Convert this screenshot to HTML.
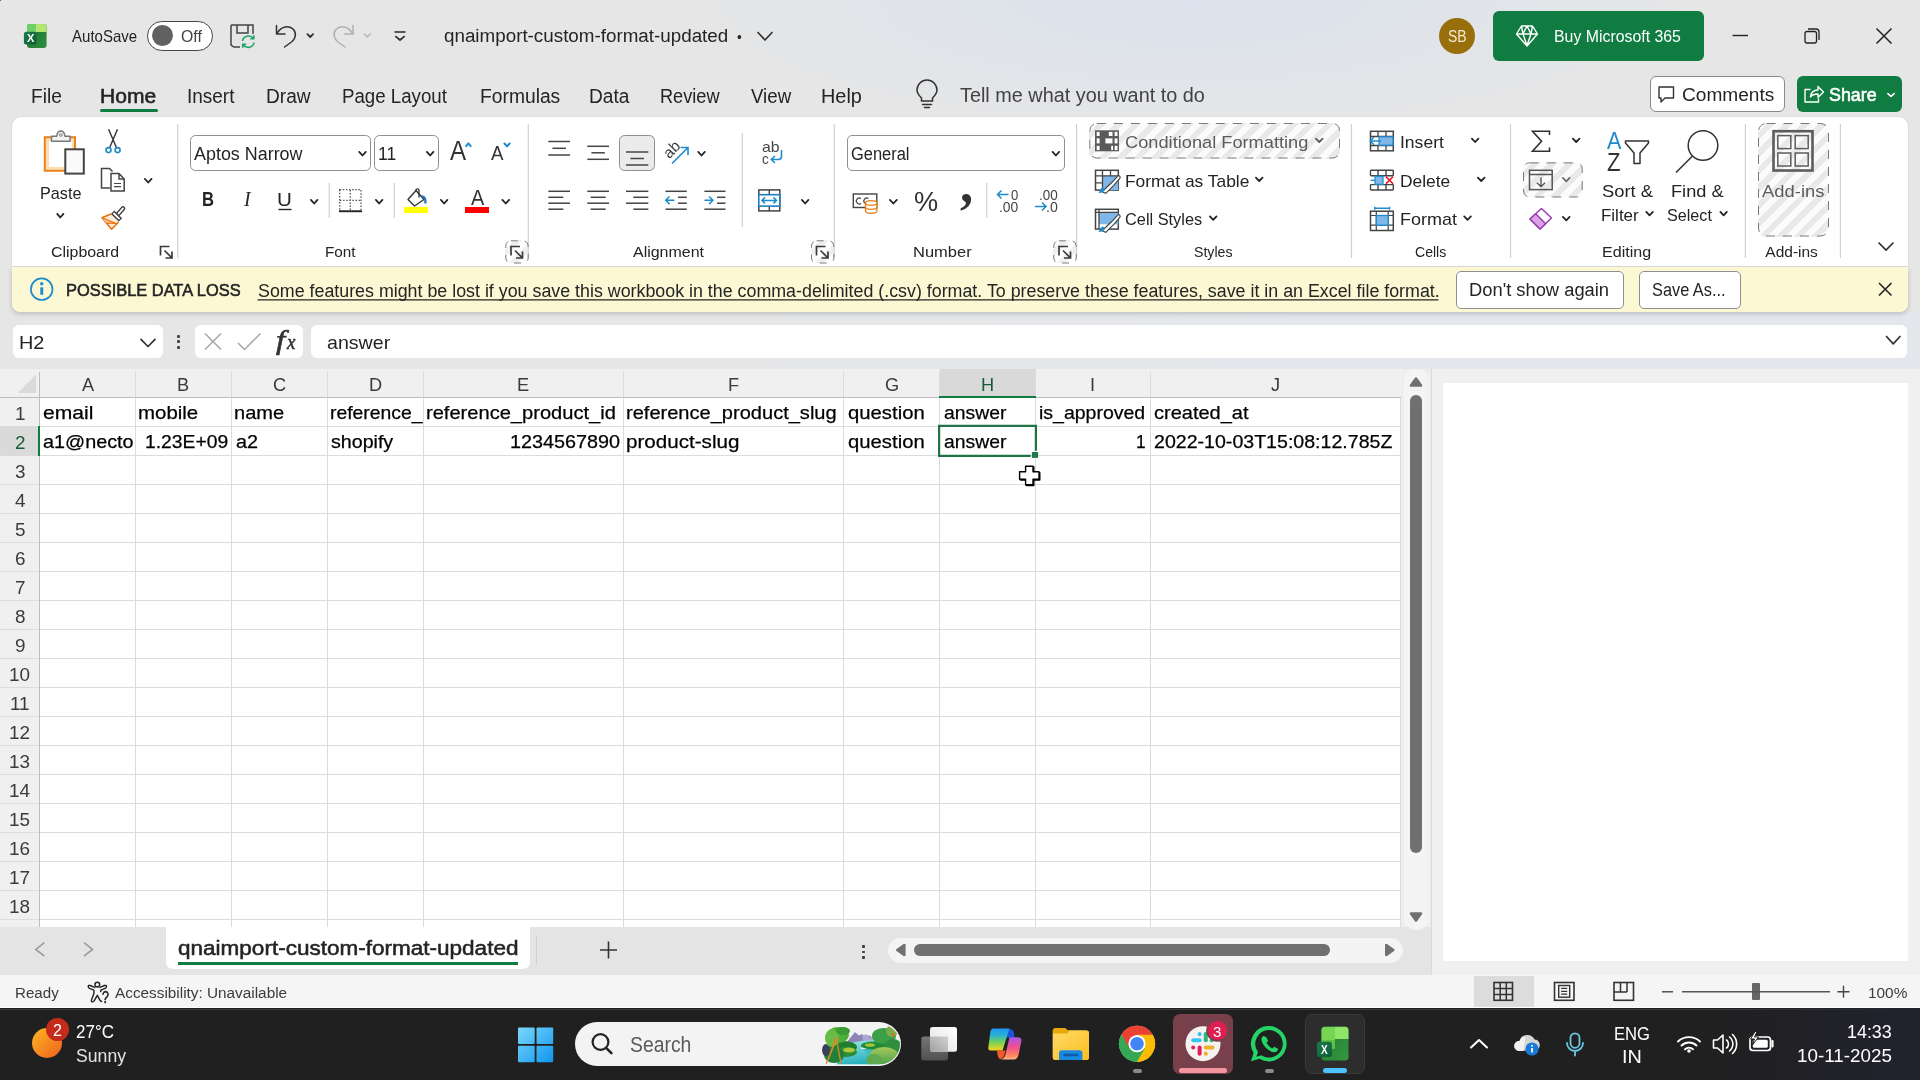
<!DOCTYPE html><html><head><meta charset="utf-8"><title>Excel</title><style>
html,body{margin:0;padding:0;}body{width:1920px;height:1080px;overflow:hidden;position:relative;background:#e6e6e6;font-family:"Liberation Sans", sans-serif;}
.b{position:absolute;}
.t{position:absolute;white-space:pre;line-height:1;transform-origin:0 0;}
svg.ov{position:absolute;left:0;top:0;width:1920px;height:1080px;overflow:visible;}

</style></head><body>
<div class="b" style="left:0px;top:0px;width:1920px;height:1008px;background:#e6e6e6;"></div>
<div class="b" style="left:600px;top:0px;width:1320px;height:118px;background:radial-gradient(ellipse 520px 135px at 590px 0px, rgba(216,225,238,0.8), rgba(216,225,238,0.4) 55%, rgba(216,225,238,0) 100%);"></div>
<div class="b" style="left:147.2px;top:21px;width:65.6px;height:29.6px;background:#fff;border-radius:14.8px;border:1.3px solid #444;box-sizing:border-box;"></div>
<div class="b" style="left:152px;top:25.2px;width:20.8px;height:20.8px;background:#616161;border-radius:50%;"></div>
<div class="b" style="left:1438.5px;top:18px;width:36.0px;height:36px;background:#986f0b;border-radius:50%;"></div>
<div class="b" style="left:1493px;top:11px;width:211px;height:49.5px;background:#107c41;border-radius:6px;"></div>
<div class="b" style="left:100px;top:108.8px;width:58px;height:3.2px;background:#107c41;border-radius:1.6px;"></div>
<div class="b" style="left:1650px;top:76px;width:134.5px;height:36px;background:#fff;border-radius:6px;border:1px solid #8a8a8a;box-sizing:border-box;"></div>
<div class="b" style="left:1797px;top:76px;width:105px;height:36px;background:#107c41;border-radius:6px;"></div>
<div class="b" style="left:12px;top:116.7px;width:1896px;height:149.8px;background:#fff;border-radius:9px 9px 0 0;box-shadow:0 0 2px rgba(0,0,0,0.13);"></div>
<div class="b" style="left:190px;top:135px;width:180.6px;height:35.7px;background:#fff;border-radius:5.5px;border:1px solid #8f8f8f;box-sizing:border-box;"></div>
<div class="b" style="left:374.2px;top:135px;width:64.6px;height:35.7px;background:#fff;border-radius:5.5px;border:1px solid #8f8f8f;box-sizing:border-box;"></div>
<div class="b" style="left:404px;top:206.8px;width:24px;height:6.7px;background:#ffff00;"></div>
<div class="b" style="left:465px;top:206.8px;width:24px;height:6.7px;background:#ff0000;"></div>
<div class="b" style="left:505.3px;top:240.3px;width:23.4px;height:23.2px;background:repeating-linear-gradient(135deg,#ffffff 0px,#ffffff 6.4px,#efefef 6.4px,#efefef 12.4px);border-radius:5px;"></div>
<div class="b" style="left:619.3px;top:135px;width:35.7px;height:35.7px;background:#ebebeb;border-radius:5.5px;border:1px solid #8f8f8f;box-sizing:border-box;"></div>
<div class="b" style="left:811px;top:240.3px;width:23.3px;height:23.2px;background:repeating-linear-gradient(135deg,#ffffff 0px,#ffffff 6.4px,#efefef 6.4px,#efefef 12.4px);border-radius:5px;"></div>
<div class="b" style="left:847.3px;top:135px;width:217.7px;height:35.7px;background:#fff;border-radius:5px;border:1px solid #8f8f8f;box-sizing:border-box;"></div>
<div class="b" style="left:1053.3px;top:240.3px;width:23.4px;height:23.2px;background:repeating-linear-gradient(135deg,#ffffff 0px,#ffffff 6.4px,#efefef 6.4px,#efefef 12.4px);border-radius:5px;"></div>
<div class="b" style="left:1089.3px;top:123px;width:250.7px;height:35.5px;background:repeating-linear-gradient(135deg,#fbfbfb 0px,#fbfbfb 6.4px,#e9e9e9 6.4px,#e9e9e9 12.4px);border-radius:7px;"></div>
<div class="b" style="left:1523px;top:162.4px;width:59.7px;height:35.1px;background:repeating-linear-gradient(135deg,#fbfbfb 0px,#fbfbfb 6.4px,#e9e9e9 6.4px,#e9e9e9 12.4px);border-radius:6px;"></div>
<div class="b" style="left:1758px;top:123px;width:71px;height:113.5px;background:repeating-linear-gradient(135deg,#fbfbfb 0px,#fbfbfb 6.4px,#e9e9e9 6.4px,#e9e9e9 12.4px);border-radius:8px;"></div>
<div class="b" style="left:600px;top:312px;width:1320px;height:57px;background:linear-gradient(90deg, rgba(224,230,238,0) 0%, rgba(226,231,238,0.65) 55%, rgba(226,231,238,0.65) 100%);"></div>
<div class="b" style="left:12px;top:266.5px;width:1896px;height:45.5px;background:#fbf8d3;border-radius:0 0 8px 8px;box-shadow:0 2px 5px rgba(0,0,0,0.18);"></div>
<div class="b" style="left:1456px;top:270.5px;width:167.5px;height:38.0px;background:#fff;border-radius:5px;border:1px solid #8f8f8f;box-sizing:border-box;"></div>
<div class="b" style="left:1638.5px;top:270.5px;width:102.0px;height:38.0px;background:#fff;border-radius:5px;border:1px solid #8f8f8f;box-sizing:border-box;"></div>
<div class="b" style="left:13px;top:325px;width:150px;height:33.3px;background:#fff;border-radius:6px;"></div>
<div class="b" style="left:177.4px;top:334.5px;width:3.0px;height:3.0px;background:#444;border-radius:1px;"></div>
<div class="b" style="left:177.4px;top:340.3px;width:3.0px;height:3.0px;background:#444;border-radius:1px;"></div>
<div class="b" style="left:177.4px;top:346.1px;width:3.0px;height:3.0px;background:#444;border-radius:1px;"></div>
<div class="b" style="left:194.7px;top:325px;width:108.3px;height:33.3px;background:#fff;border-radius:6px;"></div>
<div class="b" style="left:311px;top:325px;width:1596px;height:33.3px;background:#fff;border-radius:6px;"></div>
<div class="b" style="left:0px;top:927px;width:1431px;height:48px;background:#e4e4e5;"></div>
<div class="b" style="left:166px;top:927px;width:364px;height:41.5px;background:#fff;border-radius:0 0 7px 7px;"></div>
<div class="b" style="left:178px;top:962.3px;width:340px;height:2.9px;background:#107c41;"></div>
<div class="b" style="left:862.4px;top:944.9px;width:2.8px;height:2.8px;background:#3b3b3b;border-radius:1px;"></div>
<div class="b" style="left:862.4px;top:950.5px;width:2.8px;height:2.8px;background:#3b3b3b;border-radius:1px;"></div>
<div class="b" style="left:862.4px;top:956.1px;width:2.8px;height:2.8px;background:#3b3b3b;border-radius:1px;"></div>
<div class="b" style="left:888px;top:937.5px;width:515px;height:25.5px;background:#f4f4f4;border-radius:13px;"></div>
<div class="b" style="left:913.7px;top:944.3px;width:416.3px;height:11.7px;background:#707070;border-radius:6px;"></div>
<div class="b" style="left:0px;top:975px;width:1920px;height:33px;background:#f5f5f5;"></div>
<div class="b" style="left:1474px;top:976px;width:60px;height:32px;background:#dcdcdc;"></div>
<div class="b" style="left:1752px;top:982.5px;width:8px;height:17.8px;background:#666;border-radius:1px;"></div>
<div class="b" style="left:0px;top:369px;width:1401px;height:29px;background:#f0f0f0;"></div>
<div class="b" style="left:0px;top:398px;width:40px;height:529px;background:#f0f0f0;"></div>
<div class="b" style="left:40px;top:398px;width:1361px;height:529px;background:#fff;"></div>
<div class="b" style="left:939.5px;top:369px;width:96.0px;height:29px;background:#d9d9d9;"></div>
<div class="b" style="left:0px;top:426.5px;width:40px;height:29.5px;background:#dadada;"></div>
<div class="b" style="left:1401px;top:369px;width:30px;height:558px;background:#eeeeee;"></div>
<div class="b" style="left:1403.5px;top:369px;width:25.5px;height:561px;background:#f4f4f4;border-radius:12px;"></div>
<div class="b" style="left:1410px;top:394.5px;width:12px;height:458.5px;background:#707070;border-radius:6px;"></div>
<div class="b" style="left:1431px;top:369px;width:489px;height:606px;background:#f0f0f0;"></div>
<div class="b" style="left:1443px;top:383px;width:465px;height:578px;background:#fff;"></div>
<div class="b" style="left:0px;top:1008px;width:1920px;height:72px;background:#202020;"></div>
<div class="b" style="left:0px;top:1007px;width:1920px;height:1px;background:#fdfdfd;"></div>
<div class="b" style="left:0px;top:1009px;width:1920px;height:1px;background:#3c3c3c;"></div>
<div class="b" style="left:1700px;top:1008px;width:220px;height:72px;background:linear-gradient(90deg, rgba(32,32,32,0), rgba(34,34,46,1));"></div>
<div class="b" style="left:575px;top:1022px;width:326px;height:44px;background:#f3f3f3;border-radius:22px;"></div>
<div class="b" style="left:1133px;top:1068.7px;width:9px;height:4.3px;background:#8a8a8a;border-radius:2px;"></div>
<div class="b" style="left:1173px;top:1014px;width:60px;height:60px;background:#77404b;border-radius:7px;"></div>
<div class="b" style="left:1179px;top:1068px;width:48px;height:5px;background:#f4949f;border-radius:2.5px;"></div>
<div class="b" style="left:1265px;top:1068.7px;width:9px;height:4.3px;background:#8a8a8a;border-radius:2px;"></div>
<div class="b" style="left:1305.4px;top:1014px;width:59.6px;height:59.7px;background:#2d2d2d;border-radius:7px;border:1px solid #393939;box-sizing:border-box;"></div>
<div class="b" style="left:1323px;top:1068px;width:24px;height:5px;background:#4cc2ff;border-radius:2.5px;"></div>
<svg class="ov" viewBox="0 0 1920 1080">
<defs><linearGradient id="xg1" x1="0" y1="0" x2="1" y2="1"><stop offset="0" stop-color="#1a6e34"/><stop offset="1" stop-color="#2f8f3a"/></linearGradient><linearGradient id="xg2" x1="0" y1="0" x2="1" y2="1"><stop offset="0" stop-color="#1b7f4b"/><stop offset="1" stop-color="#0c5a35"/></linearGradient></defs><g><rect x="27" y="23.9" width="19.6" height="24" rx="3" fill="url(#xg1)"/><path d="M27 32 v-5.1 a3 3 0 0 1 3 -3 h6 v8.1 z" fill="#6ed069"/><path d="M36 23.9 h7.6 a3 3 0 0 1 3 3 v5.1 h-10.6 z" fill="#b3e76f"/><rect x="27" y="32" width="9" height="6" fill="#3fae4b"/><rect x="23.9" y="31.8" width="12.6" height="12.6" rx="2.5" fill="url(#xg2)"/></g>
<path d="M231 25 h22 v9 M231 25 v20 l3 2 h6 M237 25 v8 h11 v-8" fill="none" stroke="#444" stroke-width="1.5"/>
<path d="M242.5 41 a6 5.5 0 0 1 11 -2.5 m0.3 -3.2 v3.5 h-3.5 M254 42.5 a6 5.5 0 0 1 -11 2.3 m-0.3 3 v-3.4 h3.5" fill="none" stroke="#21a366" stroke-width="1.6"/>
<path d="M276.5 25.5 v8.5 h8.5 M277 33.5 c4 -7 12 -9 16.5 -4 c4 5 1 10 -2 12.5 l-7 5" fill="none" stroke="#333" stroke-width="1.5" stroke-linecap="round" stroke-linejoin="round"/>
<polyline points="307.4,34.1 310.25,37.0 313.1,34.1" fill="none" stroke="#333" stroke-width="1.8" stroke-linecap="round" stroke-linejoin="round"/>
<path d="M353 25.5 v8.5 h-8.5 M352.5 33.5 c-4 -7 -12 -9 -16.5 -4 c-4 5 -1 10 2 12.5 l7 5" fill="none" stroke="#b0b0b0" stroke-width="1.5" stroke-linecap="round" stroke-linejoin="round"/>
<polyline points="364.4,34.1 367.25,37.0 370.1,34.1" fill="none" stroke="#c0c0c0" stroke-width="1.8" stroke-linecap="round" stroke-linejoin="round"/>
<line x1="394.5" y1="32" x2="405.5" y2="32" stroke="#333" stroke-width="1.6" stroke-linecap="butt"/>
<polyline points="395.9,36.6 400.0,40.0 404.1,36.6" fill="none" stroke="#333" stroke-width="1.8" stroke-linecap="round" stroke-linejoin="round"/>
<polyline points="758,32.5 765.0,40 772,32.5" fill="none" stroke="#333" stroke-width="1.7" stroke-linecap="round" stroke-linejoin="round"/>
<path d="M1516.5 34 l5 -8 h11 l5 8 l-10.5 12 z M1516.5 34 h21 M1523 34 l4 11.5 l4 -11.5 M1521.5 26 l1.5 8 M1532.5 26 l-1.5 8 M1527 26 l-4 8 M1527 26 l4 8" fill="none" stroke="#fff" stroke-width="1.4" stroke-linejoin="round"/>
<line x1="1732.5" y1="35.5" x2="1748" y2="35.5" stroke="#222" stroke-width="1.4" stroke-linecap="butt"/>
<rect x="1805" y="31.5" width="11.5" height="11.5" rx="2" fill="none" stroke="#222" stroke-width="1.3"/><path d="M1808 29 h8 a3 3 0 0 1 3 3 v8" fill="none" stroke="#222" stroke-width="1.3"/>
<path d="M1876.5 28.5 l15 15 M1891.5 28.5 l-15 15" stroke="#222" stroke-width="1.5"/>
<path d="M921.5 98 c-3 -3 -4.5 -5 -4.5 -8 a10 10 0 0 1 20 0 c0 3 -1.5 5 -4.5 8 v3 h-11 z M921.5 101 h11 M922.5 104.5 h9 M924.5 107.5 h5" fill="none" stroke="#333" stroke-width="1.5" stroke-linecap="round"/>
<path d="M1659 87 h14.5 v11 h-8.5 l-4 4 v-4 h-2 z" fill="none" stroke="#333" stroke-width="1.4" stroke-linejoin="round"/>
<path d="M1810.5 89.5 h-5.500 v12.500 h13.500 v-3.500 M1810.5 97 c0.5 -5 4 -7 7.500 -7 v-3.500 l5.500 5.500 l-5.500 5.500 v-3.500 c-4 0 -6 0.5 -7.500 3 z" fill="none" stroke="#fff" stroke-width="1.4" stroke-linejoin="round"/>
<polyline points="1887.9,93.6 1891.0,96.5 1894.1,93.6" fill="none" stroke="#fff" stroke-width="1.6" stroke-linecap="round" stroke-linejoin="round"/>
<line x1="177.7" y1="124" x2="177.7" y2="258" stroke="#d1d1d1" stroke-width="1.2" stroke-linecap="butt"/>
<line x1="528.3" y1="124" x2="528.3" y2="258" stroke="#d1d1d1" stroke-width="1.2" stroke-linecap="butt"/>
<line x1="834.3" y1="124" x2="834.3" y2="258" stroke="#d1d1d1" stroke-width="1.2" stroke-linecap="butt"/>
<line x1="1076.6" y1="124" x2="1076.6" y2="258" stroke="#d1d1d1" stroke-width="1.2" stroke-linecap="butt"/>
<line x1="1351.5" y1="124" x2="1351.5" y2="258" stroke="#d1d1d1" stroke-width="1.2" stroke-linecap="butt"/>
<line x1="1510.5" y1="124" x2="1510.5" y2="258" stroke="#d1d1d1" stroke-width="1.2" stroke-linecap="butt"/>
<line x1="1745.4" y1="124" x2="1745.4" y2="258" stroke="#d1d1d1" stroke-width="1.2" stroke-linecap="butt"/>
<line x1="1840.4" y1="124" x2="1840.4" y2="258" stroke="#d1d1d1" stroke-width="1.2" stroke-linecap="butt"/>
<line x1="329.3" y1="183" x2="329.3" y2="218" stroke="#d1d1d1" stroke-width="1.2" stroke-linecap="butt"/>
<line x1="394.3" y1="183" x2="394.3" y2="218" stroke="#d1d1d1" stroke-width="1.2" stroke-linecap="butt"/>
<line x1="742.3" y1="133" x2="742.3" y2="227" stroke="#d1d1d1" stroke-width="1.2" stroke-linecap="butt"/>
<line x1="986.7" y1="183" x2="986.7" y2="218" stroke="#d1d1d1" stroke-width="1.2" stroke-linecap="butt"/>
<rect x="44.800" y="137.200" width="30.200" height="33.600" fill="#fbdcae" stroke="#e8821e" stroke-width="2"/><rect x="49" y="141" width="23" height="26" fill="#fff"/><path d="M51.500 141.300 v-5 h5.200 c0.300 -3 1.800 -5.300 4.100 -5.300 s3.800 2.300 4.100 5.300 h5.200 v5 z" fill="#f3f3f3" stroke="#777" stroke-width="1.400" stroke-linejoin="round"/><circle cx="60.800" cy="135" r="1.300" fill="#fff" stroke="#777" stroke-width="1"/><rect x="65.300" y="149.300" width="18.500" height="24.300" fill="#fafafa" stroke="#444" stroke-width="2"/>
<polyline points="57.2,213.9 60.3,217.5 63.4,213.9" fill="none" stroke="#242424" stroke-width="1.8" stroke-linecap="round" stroke-linejoin="round"/>
<path d="M108.600 129.300 L116.400 147.600 M117.500 129.300 L109.700 147.600" stroke="#333" stroke-width="1.400" fill="none"/><circle cx="108.500" cy="150.100" r="2.500" fill="none" stroke="#1e8bcd" stroke-width="1.600"/><circle cx="117.600" cy="150.100" r="2.500" fill="none" stroke="#1e8bcd" stroke-width="1.600"/>
<path d="M110 188 h-8.5 v-19.5 h8 l3 3" fill="none" stroke="#444" stroke-width="1.5"/><path d="M111 173.5 h8 l5.2 5.5 v12 h-13.2 z M119 173.5 v5.5 h5.2" fill="#fff" stroke="#444" stroke-width="1.5"/><path d="M114 183.5 h7 M114 186.7 h7" stroke="#444" stroke-width="1.2"/>
<polyline points="144.9,178.9 148.2,182.5 151.5,178.9" fill="none" stroke="#242424" stroke-width="1.8" stroke-linecap="round" stroke-linejoin="round"/>
<path d="M110.800 214 L102 217.700 L111.600 229.200 L118.600 222" fill="#fdebd6" stroke="#e8710a" stroke-width="1.500" stroke-linejoin="round"/><path d="M102 217.700 L116 223.500 L106.500 223.200" fill="#f9c89a" stroke="#e8710a" stroke-width="1.200" stroke-linejoin="round"/><path d="M118.300 213.800 L123 208.400" stroke="#3b3b3b" stroke-width="4.600" stroke-linecap="round"/><path d="M118.300 213.800 L123 208.400" stroke="#fff" stroke-width="1.800" stroke-linecap="round"/><path d="M112.600 212.200 L120.400 219.900" stroke="#3b3b3b" stroke-width="4.800" stroke-linecap="butt"/><path d="M113.400 213 L119.600 219.100" stroke="#fff" stroke-width="1.900" stroke-linecap="butt"/>
<path d="M160.5 255.5 V246.5 H169.5 M164.5 250.5 L172.0 258.0 M172.0 251.5 V258.0 H165.5" fill="none" stroke="#3b3b3b" stroke-width="1.7"/>
<polyline points="359.2,151.9 362.5,155.5 365.8,151.9" fill="none" stroke="#242424" stroke-width="1.8" stroke-linecap="round" stroke-linejoin="round"/>
<polyline points="426.9,151.9 430.15,155.5 433.4,151.9" fill="none" stroke="#242424" stroke-width="1.8" stroke-linecap="round" stroke-linejoin="round"/>
<polyline points="466.1,146.1 468.4,143.4 470.7,146.1" fill="none" stroke="#1e8bcd" stroke-width="2" stroke-linecap="round" stroke-linejoin="round"/>
<polyline points="504.5,143.5 507.05,146.4 509.6,143.5" fill="none" stroke="#1e8bcd" stroke-width="2" stroke-linecap="round" stroke-linejoin="round"/>
<line x1="278.5" y1="209.5" x2="291.5" y2="209.5" stroke="#242424" stroke-width="1.4" stroke-linecap="butt"/>
<polyline points="310.9,199.9 314.15,203.5 317.4,199.9" fill="none" stroke="#242424" stroke-width="1.8" stroke-linecap="round" stroke-linejoin="round"/>
<rect x="339.7" y="189.7" width="21.3" height="21.3" fill="none" stroke="#555" stroke-width="1.3" stroke-dasharray="1.5 1.6"/><path d="M350.3 190 v21 M340 200.3 h21" stroke="#555" stroke-width="1.3" stroke-dasharray="1.5 1.6"/><path d="M339 211.3 h23" stroke="#222" stroke-width="1.8"/>
<polyline points="375.9,199.9 379.15,203.5 382.4,199.9" fill="none" stroke="#242424" stroke-width="1.8" stroke-linecap="round" stroke-linejoin="round"/>
<path d="M408 199.500 l8 -9 l8 9 l-9.500 6.500 z" fill="#fff" stroke="#3b3b3b" stroke-width="1.500" stroke-linejoin="round"/><path d="M415.800 192 v-1.500 a1.600 1.600 0 0 1 3.200 0 v7" fill="none" stroke="#3b3b3b" stroke-width="1.400"/><path d="M421.500 196 c3.500 0.500 4.500 3.500 3.700 7.500" fill="none" stroke="#1e74c8" stroke-width="2.200"/>
<polyline points="440.9,199.9 444.15,203.5 447.4,199.9" fill="none" stroke="#242424" stroke-width="1.8" stroke-linecap="round" stroke-linejoin="round"/>
<polyline points="502.4,199.9 505.75,203.5 509.1,199.9" fill="none" stroke="#242424" stroke-width="1.8" stroke-linecap="round" stroke-linejoin="round"/>
<rect x="505.8" y="240.8" width="22.400000000000034" height="22.19999999999999" rx="5" fill="none" stroke="#7a7a7a" stroke-width="1" stroke-dasharray="7 7"/>
<path d="M511 255.5 V246.5 H520 M515 250.5 L522.5 258.0 M522.5 251.5 V258.0 H516" fill="none" stroke="#3b3b3b" stroke-width="1.7"/>
<line x1="548.3" y1="141.5" x2="570" y2="141.5" stroke="#444" stroke-width="1.5" stroke-linecap="butt"/>
<line x1="552.4" y1="148.3" x2="565.9" y2="148.3" stroke="#444" stroke-width="1.5" stroke-linecap="butt"/>
<line x1="548.3" y1="155" x2="570" y2="155" stroke="#444" stroke-width="1.5" stroke-linecap="butt"/>
<line x1="587.3" y1="146.3" x2="609" y2="146.3" stroke="#444" stroke-width="1.5" stroke-linecap="butt"/>
<line x1="591.4" y1="152.8" x2="604.9" y2="152.8" stroke="#444" stroke-width="1.5" stroke-linecap="butt"/>
<line x1="587.3" y1="159.3" x2="609" y2="159.3" stroke="#444" stroke-width="1.5" stroke-linecap="butt"/>
<line x1="626" y1="152" x2="648.3" y2="152" stroke="#444" stroke-width="1.5" stroke-linecap="butt"/>
<line x1="630.4" y1="158.5" x2="643.9" y2="158.5" stroke="#444" stroke-width="1.5" stroke-linecap="butt"/>
<line x1="626" y1="165" x2="648.3" y2="165" stroke="#444" stroke-width="1.5" stroke-linecap="butt"/>
<path d="M672 163.5 l15.5 -15.5 M680.5 147.5 h7.5 v7.5" fill="none" stroke="#1e8bcd" stroke-width="1.6"/>
<polyline points="698.2,151.9 701.5,155.5 704.8,151.9" fill="none" stroke="#242424" stroke-width="1.8" stroke-linecap="round" stroke-linejoin="round"/>
<path d="M781.5 150 v6.5 a3 3 0 0 1 -3 3 h-7 M775 156 l-3.7 3.5 l3.7 3.5" fill="none" stroke="#1e8bcd" stroke-width="1.6"/>
<line x1="548.3" y1="191.3" x2="570" y2="191.3" stroke="#444" stroke-width="1.5" stroke-linecap="butt"/>
<line x1="548.3" y1="197.3" x2="563.3" y2="197.3" stroke="#444" stroke-width="1.5" stroke-linecap="butt"/>
<line x1="548.3" y1="203.2" x2="570" y2="203.2" stroke="#444" stroke-width="1.5" stroke-linecap="butt"/>
<line x1="548.3" y1="209.2" x2="563.3" y2="209.2" stroke="#444" stroke-width="1.5" stroke-linecap="butt"/>
<line x1="587.3" y1="191.3" x2="609" y2="191.3" stroke="#444" stroke-width="1.5" stroke-linecap="butt"/>
<line x1="590.65" y1="197.3" x2="605.65" y2="197.3" stroke="#444" stroke-width="1.5" stroke-linecap="butt"/>
<line x1="587.3" y1="203.2" x2="609" y2="203.2" stroke="#444" stroke-width="1.5" stroke-linecap="butt"/>
<line x1="590.65" y1="209.2" x2="605.65" y2="209.2" stroke="#444" stroke-width="1.5" stroke-linecap="butt"/>
<line x1="626" y1="191.3" x2="648.3" y2="191.3" stroke="#444" stroke-width="1.5" stroke-linecap="butt"/>
<line x1="633.3" y1="197.3" x2="648.3" y2="197.3" stroke="#444" stroke-width="1.5" stroke-linecap="butt"/>
<line x1="626" y1="203.2" x2="648.3" y2="203.2" stroke="#444" stroke-width="1.5" stroke-linecap="butt"/>
<line x1="633.3" y1="209.2" x2="648.3" y2="209.2" stroke="#444" stroke-width="1.5" stroke-linecap="butt"/>
<line x1="665.5" y1="191.3" x2="686.8" y2="191.3" stroke="#444" stroke-width="1.5" stroke-linecap="butt"/>
<line x1="665.5" y1="209.2" x2="686.8" y2="209.2" stroke="#444" stroke-width="1.5" stroke-linecap="butt"/>
<line x1="678" y1="197.3" x2="686.8" y2="197.3" stroke="#444" stroke-width="1.5" stroke-linecap="butt"/>
<line x1="678" y1="203.2" x2="686.8" y2="203.2" stroke="#444" stroke-width="1.5" stroke-linecap="butt"/>
<path d="M674.500 200.300 h-8.500 M669.500 196.500 l-3.800 3.800 l3.800 3.800" fill="none" stroke="#1e8bcd" stroke-width="1.5"/>
<line x1="704.4" y1="191.3" x2="725.5" y2="191.3" stroke="#444" stroke-width="1.5" stroke-linecap="butt"/>
<line x1="704.4" y1="209.2" x2="725.5" y2="209.2" stroke="#444" stroke-width="1.5" stroke-linecap="butt"/>
<line x1="717" y1="197.3" x2="725.5" y2="197.3" stroke="#444" stroke-width="1.5" stroke-linecap="butt"/>
<line x1="717" y1="203.2" x2="725.5" y2="203.2" stroke="#444" stroke-width="1.5" stroke-linecap="butt"/>
<path d="M704.400 200.300 h8.500 M709.100 196.500 l3.800 3.800 l-3.800 3.800" fill="none" stroke="#1e8bcd" stroke-width="1.5"/>
<rect x="758.800" y="189.900" width="21" height="21" fill="#fff" stroke="#444" stroke-width="1.500"/><path d="M769.300 190 v4.500 M769.300 206.500 v4.500" stroke="#444" stroke-width="1.400"/><rect x="758.800" y="194.700" width="21" height="11.400" fill="#fff" stroke="#1e7fc0" stroke-width="1.600"/><path d="M762 200.400 h14.500 M765 197.400 l-3 3 l3 3 M773.500 197.400 l3 3 l-3 3" fill="none" stroke="#1e8bcd" stroke-width="1.500"/>
<polyline points="801.9,199.9 805.15,203.5 808.4,199.9" fill="none" stroke="#242424" stroke-width="1.8" stroke-linecap="round" stroke-linejoin="round"/>
<rect x="811.5" y="240.8" width="22.299999999999955" height="22.19999999999999" rx="5" fill="none" stroke="#7a7a7a" stroke-width="1" stroke-dasharray="7 7"/>
<path d="M816.5 255.5 V246.5 H825.5 M820.5 250.5 L828.0 258.0 M828.0 251.5 V258.0 H821.5" fill="none" stroke="#3b3b3b" stroke-width="1.7"/>
<polyline points="1052.6,151.9 1055.85,155.5 1059.1,151.9" fill="none" stroke="#242424" stroke-width="1.8" stroke-linecap="round" stroke-linejoin="round"/>
<rect x="853.3" y="194" width="23.5" height="13.5" fill="#fff" stroke="#444" stroke-width="1.4"/><path d="M861 198.5 a3 3 0 1 0 0 5 M868.5 198.5 a3 3 0 1 0 0 5" fill="none" stroke="#444" stroke-width="1.2"/><path d="M865.5 203 v8 a5.7 2.3 0 0 0 11.4 0 v-8 z" fill="#fff" stroke="#e8821e" stroke-width="1.3"/><ellipse cx="871.2" cy="203" rx="5.7" ry="2.3" fill="#fff" stroke="#e8821e" stroke-width="1.3"/><path d="M865.5 207 a5.7 2.3 0 0 0 11.4 0" fill="none" stroke="#e8821e" stroke-width="1.3"/>
<polyline points="889.9,199.9 893.35,203.5 896.8,199.9" fill="none" stroke="#242424" stroke-width="1.8" stroke-linecap="round" stroke-linejoin="round"/>
<path d="M1008.5 194.5 h-11 M1001.5 190.5 l-4 4 l4 4" fill="none" stroke="#1e8bcd" stroke-width="1.5"/>
<path d="M1035 206.5 h11 M1042 202.5 l4 4 l-4 4" fill="none" stroke="#1e8bcd" stroke-width="1.5"/>
<rect x="1053.8" y="240.8" width="22.40000000000009" height="22.19999999999999" rx="5" fill="none" stroke="#7a7a7a" stroke-width="1" stroke-dasharray="7 7"/>
<path d="M1059 255.5 V246.5 H1068 M1063 250.5 L1070.5 258.0 M1070.5 251.5 V258.0 H1064" fill="none" stroke="#3b3b3b" stroke-width="1.7"/>
<rect x="1089.8" y="123.5" width="249.70000000000005" height="34.5" rx="7" fill="none" stroke="#7a7a7a" stroke-width="1" stroke-dasharray="9 8"/>
<rect x="1095" y="130.3" width="24" height="21" fill="#5a5a5a"/><rect x="1096.7" y="131.9" width="2.9" height="4.1" fill="#fff"/><rect x="1096.7" y="138.4" width="2.9" height="5" fill="#fff"/><rect x="1096.7" y="145.8" width="2.9" height="4.3" fill="#fff"/><rect x="1114.6" y="131.9" width="2.9" height="4.1" fill="#fff"/><rect x="1114.6" y="138.4" width="2.9" height="5" fill="#fff"/><rect x="1114.6" y="145.8" width="2.9" height="4.3" fill="#fff"/><rect x="1105.4" y="138.4" width="7.1" height="5" fill="#fff"/><rect x="1108.8" y="131.9" width="3.7" height="4.1" fill="#fff"/><rect x="1111.2" y="145.8" width="1.8" height="4.3" fill="#fff"/>
<polyline points="1315.9,138.6 1319.25,142.0 1322.6,138.6" fill="none" stroke="#5c5c5c" stroke-width="1.8" stroke-linecap="round" stroke-linejoin="round"/>
<rect x="1095.5" y="170.3" width="22.8" height="19.8" fill="#fff" stroke="#444" stroke-width="1.5"/><rect x="1102.5" y="175.8" width="15.8" height="14.3" fill="#7fb8e8"/><path d="M1095.5 175.8 h22.8 M1095.5 182.8 h7 M1102.5 170.3 v19.8 M1110.5 170.3 v5.5" stroke="#444" stroke-width="1.3" fill="none"/><path d="M1102 191.8 l9.5 -9 l6 -6.5 a1.5 1.5 0 0 1 2.3 2 l-6 7 l-8 8 z" fill="#fff" stroke="#444" stroke-width="1.2"/><path d="M1098.5 192.8 c2.5 0.5 6 -1 6.5 -3.5 l-2 -1.8 c-2.5 0.3 -3 3.5 -4.5 5.3 z" fill="#1e8bcd"/>
<polyline points="1255.9,177.6 1259.25,181.0 1262.6,177.6" fill="none" stroke="#242424" stroke-width="1.8" stroke-linecap="round" stroke-linejoin="round"/>
<rect x="1095.5" y="209.3" width="22.8" height="19.8" fill="#fff" stroke="#444" stroke-width="1.5"/><rect x="1099" y="212.3" width="19.3" height="12" fill="#7fb8e8"/><path d="M1095.5 212.3 h22.8 M1099 209.3 v19.8" stroke="#444" stroke-width="1.3" fill="none"/><path d="M1102 230.8 l9.5 -9 l6 -6.5 a1.5 1.5 0 0 1 2.3 2 l-6 7 l-8 8 z" fill="#fff" stroke="#444" stroke-width="1.2"/><path d="M1098.5 231.8 c2.5 0.5 6 -1 6.5 -3.5 l-2 -1.8 c-2.5 0.3 -3 3.5 -4.5 5.3 z" fill="#1e8bcd"/>
<polyline points="1209.9,216.4 1213.2,219.8 1216.5,216.4" fill="none" stroke="#242424" stroke-width="1.8" stroke-linecap="round" stroke-linejoin="round"/>
<rect x="1370.5" y="131.3" width="22.8" height="19.5" fill="#fff" stroke="#444" stroke-width="1.5"/><path d="M1370.5 136.5 h22.8 M1370.5 145.5 h22.8 M1378 131.3 v5 M1386 131.3 v5 M1378 145.5 v5 M1386 145.5 v5" stroke="#444" stroke-width="1.3"/><rect x="1379" y="136.8" width="14" height="8.4" fill="#7fb8e8" stroke="#1e8bcd" stroke-width="1.2"/><path d="M1381 141 h-11 M1374 137.2 l-3.8 3.8 l3.8 3.8" fill="none" stroke="#1e8bcd" stroke-width="1.5"/>
<polyline points="1471.9,138.6 1475.15,142.0 1478.4,138.6" fill="none" stroke="#242424" stroke-width="1.8" stroke-linecap="round" stroke-linejoin="round"/>
<path d="M1370.5 170.3 h22.8 M1370.5 190 h22.8 M1370.5 170.3 v5.5 M1370.5 184.5 v5.5 M1393.3 170.3 v5.5 M1393.3 184.5 v5.5 M1378 170.3 v5 M1386 170.3 v5 M1378 185 v5 M1386 185 v5 M1370.5 175.8 h22.8 M1370.5 184.6 h22.8" stroke="#444" stroke-width="1.4" fill="none"/><rect x="1375" y="176.3" width="8" height="8" fill="#7fb8e8" stroke="#1e8bcd" stroke-width="1.2"/><path d="M1370.5 180.3 h4.5" stroke="#1e8bcd" stroke-width="1.3"/><path d="M1386 176.7 l7 7 M1393 176.7 l-7 7" stroke="#e81123" stroke-width="1.6"/>
<polyline points="1477.9,177.6 1481.25,181.0 1484.6,177.6" fill="none" stroke="#242424" stroke-width="1.8" stroke-linecap="round" stroke-linejoin="round"/>
<path d="M1374.700 206.800 v3 M1389.500 206.800 v3 M1374.700 208.300 h14.800" stroke="#1e8bcd" stroke-width="1.400" fill="none"/><rect x="1370.500" y="211.200" width="22.800" height="19.300" fill="#fff" stroke="#444" stroke-width="1.500"/><path d="M1370.500 215.500 h22.800 M1370.500 225.200 h22.800 M1376.300 211.200 v19.300 M1388.200 211.200 v19.300" stroke="#444" stroke-width="1.200"/><rect x="1376.300" y="215.500" width="11.900" height="9.700" fill="#7fb8e8" stroke="#1e8bcd" stroke-width="1.300"/>
<polyline points="1464.2,216.4 1467.55,219.8 1470.9,216.4" fill="none" stroke="#242424" stroke-width="1.8" stroke-linecap="round" stroke-linejoin="round"/>
<path d="M1549.5 135 v-3.7 h-17 l9 10 l-9 10 h17 v-3.7" fill="none" stroke="#333" stroke-width="1.6" stroke-linejoin="miter"/>
<polyline points="1572.9,138.6 1576.2,142.0 1579.5,138.6" fill="none" stroke="#242424" stroke-width="1.8" stroke-linecap="round" stroke-linejoin="round"/>
<rect x="1523.5" y="162.9" width="58.700000000000045" height="34.099999999999994" rx="6" fill="none" stroke="#7a7a7a" stroke-width="1" stroke-dasharray="9 8"/>
<rect x="1529.5" y="170.3" width="22.7" height="19.3" fill="none" stroke="#555" stroke-width="1.5"/><path d="M1529.5 174.5 h22.7 M1541 177.5 v9 M1537 182.8 l4 4 l4 -4" fill="none" stroke="#555" stroke-width="1.4"/>
<polyline points="1562.9,177.9 1566.25,181.3 1569.6,177.9" fill="none" stroke="#6a6a6a" stroke-width="1.8" stroke-linecap="round" stroke-linejoin="round"/>
<path d="M1530 219 l11.5 -10.5 l10 9.5 l-11.5 11 z" fill="#fff" stroke="#9b3cb0" stroke-width="1.5" stroke-linejoin="round"/><path d="M1530 219 l5.7 -5.2 l10 10 l-5.7 5.2 z" fill="#d9a3e3" stroke="#9b3cb0" stroke-width="1.5" stroke-linejoin="round"/>
<polyline points="1562.9,216.9 1566.25,220.3 1569.6,216.9" fill="none" stroke="#242424" stroke-width="1.8" stroke-linecap="round" stroke-linejoin="round"/>
<path d="M1625.5 141 h23 v2 l-8.5 10 v10.5 h-6 v-10.5 l-8.5 -10 z" fill="none" stroke="#333" stroke-width="1.5" stroke-linejoin="round"/>
<polyline points="1646.3,211.9 1649.5500000000002,215.3 1652.8,211.9" fill="none" stroke="#242424" stroke-width="1.8" stroke-linecap="round" stroke-linejoin="round"/>
<circle cx="1703" cy="145.5" r="14.8" fill="none" stroke="#333" stroke-width="1.5"/><path d="M1692.5 156 l-16.5 16.5" stroke="#333" stroke-width="1.6"/>
<polyline points="1720.4,211.9 1723.6,215.3 1726.8,211.9" fill="none" stroke="#242424" stroke-width="1.8" stroke-linecap="round" stroke-linejoin="round"/>
<rect x="1758.5" y="123.5" width="70" height="112.5" rx="8" fill="none" stroke="#7a7a7a" stroke-width="1" stroke-dasharray="9 8"/>
<rect x="1773.5" y="131.2" width="39" height="39.3" fill="none" stroke="#5c5c5c" stroke-width="2.6"/><rect x="1777.8" y="135.6" width="13" height="13" fill="none" stroke="#5c5c5c" stroke-width="1.5"/><rect x="1795.2" y="135.6" width="13" height="13" fill="none" stroke="#5c5c5c" stroke-width="1.5"/><rect x="1777.8" y="153" width="13" height="13" fill="none" stroke="#5c5c5c" stroke-width="1.5"/><rect x="1795.2" y="153" width="13" height="13" fill="none" stroke="#5c5c5c" stroke-width="1.5"/>
<polyline points="1879,243 1886.0,250.2 1893,243" fill="none" stroke="#333" stroke-width="1.7" stroke-linecap="round" stroke-linejoin="round"/>
<circle cx="41.7" cy="289.2" r="10.8" fill="none" stroke="#1e8bcd" stroke-width="1.7"/><rect x="40.3" y="287.3" width="2.9" height="7.5" fill="#1e8bcd"/><circle cx="41.7" cy="283.8" r="1.7" fill="#1e8bcd"/>
<line x1="257.5" y1="299.8" x2="1438.5" y2="299.8" stroke="#242424" stroke-width="1.2" stroke-linecap="butt"/>
<path d="M1879 283 l12.5 12.5 M1891.5 283 l-12.5 12.5" stroke="#222" stroke-width="1.6"/>
<polyline points="141,339.3 148.0,346.5 155,339.3" fill="none" stroke="#333" stroke-width="1.7" stroke-linecap="round" stroke-linejoin="round"/>
<path d="M205 333.5 l16 16 M221 333.5 l-16 16" stroke="#a6a6a6" stroke-width="1.5"/><path d="M238 343 l6.5 6.5 l16 -16" fill="none" stroke="#a6a6a6" stroke-width="1.5"/>
<polyline points="1886.5,336.5 1893.25,343.8 1900,336.5" fill="none" stroke="#333" stroke-width="1.7" stroke-linecap="round" stroke-linejoin="round"/>
<line x1="1431.5" y1="369" x2="1431.5" y2="975" stroke="#dadada" stroke-width="1" stroke-linecap="butt"/>
<polyline points="0,0 0.0,0 0,0" fill="none" stroke="#242424" stroke-width="1.8" stroke-linecap="round" stroke-linejoin="round"/>
<polyline points="44.3,942.7 35.8,949.4 44.3,956.2" fill="none" stroke="#9a9a9a" stroke-width="1.6"/><polyline points="84,942.7 92.5,949.4 84,956.2" fill="none" stroke="#9a9a9a" stroke-width="1.6"/>
<line x1="536.5" y1="936" x2="536.5" y2="964" stroke="#cfcfcf" stroke-width="1" stroke-linecap="butt"/>
<path d="M600 950 h17 M608.5 941.5 v17" stroke="#333" stroke-width="1.6"/>
<path d="M897.300 950 l7 -5 v10 z" fill="#707070" stroke="#707070" stroke-width="2.600" stroke-linejoin="round"/>
<path d="M1393.300 950 l-7 -5 v10 z" fill="#707070" stroke="#707070" stroke-width="2.600" stroke-linejoin="round"/>
<circle cx="97.300" cy="984.600" r="2.400" fill="none" stroke="#222" stroke-width="1.400"/><path d="M94.800 987.400 L90.200 985.500 Q88.400 985 88.200 986.500 Q88.200 987.700 89.600 988.300 L93.900 990.100 L93.900 993.600 L91.400 1000.200 Q91.200 1001.900 92.800 1001.900 Q93.800 1001.800 94.300 1000.600 L97.300 995.300 L99.600 999.600 Q100.300 1001 101.600 1001.500" fill="none" stroke="#222" stroke-width="1.400" stroke-linecap="round" stroke-linejoin="round"/><path d="M99.900 987.400 L104.400 985.500 Q106.300 985 106.500 986.500 Q106.500 987.700 105.100 988.300 L100.800 990.100 L100.700 991.600" fill="none" stroke="#222" stroke-width="1.400" stroke-linecap="round" stroke-linejoin="round"/>
<rect x="1494" y="982.5" width="18.5" height="17.8" fill="none" stroke="#333" stroke-width="1.6"/><path d="M1500.2 982.5 v17.8 M1506.3 982.5 v17.8 M1494 988.4 h18.5 M1494 994.4 h18.5" stroke="#333" stroke-width="1.5"/>
<rect x="1554.5" y="982.5" width="19.5" height="17.8" fill="none" stroke="#333" stroke-width="1.6"/><rect x="1558.700" y="985.500" width="11" height="11.700" fill="none" stroke="#333" stroke-width="1.400"/><path d="M1561.200 988.400 h6 M1561.200 991.300 h6 M1561.200 994.200 h6" stroke="#333" stroke-width="1.200"/>
<rect x="1614" y="982.5" width="19.5" height="17.8" fill="none" stroke="#333" stroke-width="1.6"/><path d="M1620.5 982.5 v9.5 M1627 982.5 v9.5 M1614 992 h13" stroke="#333" stroke-width="1.5" fill="none"/>
<line x1="1662" y1="991.8" x2="1673" y2="991.8" stroke="#444" stroke-width="1.4" stroke-linecap="butt"/>
<line x1="1682" y1="991.8" x2="1830" y2="991.8" stroke="#555" stroke-width="1.5" stroke-linecap="butt"/>
<path d="M1837.5 991.8 h12 M1843.5 985.8 v12" stroke="#444" stroke-width="1.4"/>
<path d="M36 374.5 V393 H17.5 z" fill="#dadada"/>
<path d="M135.5 398 V927 M231.5 398 V927 M327.5 398 V927 M423.5 398 V927 M623.5 398 V927 M843.5 398 V927 M939.5 398 V927 M1035.5 398 V927 M1150.5 398 V927 M1400.5 398 V927 M40 426.5 H1401 M40 455.5 H1401 M40 484.5 H1401 M40 513.5 H1401 M40 542.5 H1401 M40 571.5 H1401 M40 600.5 H1401 M40 629.5 H1401 M40 658.5 H1401 M40 687.5 H1401 M40 716.5 H1401 M40 745.5 H1401 M40 774.5 H1401 M40 803.5 H1401 M40 832.5 H1401 M40 861.5 H1401 M40 890.5 H1401 M40 919.5 H1401" stroke="#dcdcdc" stroke-width="1" fill="none"/>
<path d="M135.5 372 V397 M231.5 372 V397 M327.5 372 V397 M423.5 372 V397 M623.5 372 V397 M843.5 372 V397 M939.5 372 V397 M1035.5 372 V397 M1150.5 372 V397 M0 426.5 H39 M0 455.5 H39 M0 484.5 H39 M0 513.5 H39 M0 542.5 H39 M0 571.5 H39 M0 600.5 H39 M0 629.5 H39 M0 658.5 H39 M0 687.5 H39 M0 716.5 H39 M0 745.5 H39 M0 774.5 H39 M0 803.5 H39 M0 832.5 H39 M0 861.5 H39 M0 890.5 H39 M0 919.5 H39" stroke="#dcdcdc" stroke-width="1" fill="none"/>
<line x1="0" y1="397.5" x2="1401" y2="397.5" stroke="#bdbdbd" stroke-width="1" stroke-linecap="butt"/>
<line x1="39.5" y1="372" x2="39.5" y2="927" stroke="#bdbdbd" stroke-width="1" stroke-linecap="butt"/>
<rect x="939" y="396" width="97" height="2" fill="#107c41"/><rect x="38" y="426" width="2" height="30" fill="#107c41"/>
<path d="M1030.700 455.900 H939.100 V425.900 H1035.900 V450.700" fill="none" stroke="#217346" stroke-width="2.200"/><rect x="1031.900" y="452" width="6.200" height="5.900" fill="#1e7b4c"/>
<path d="M1026.400 467 h7.400 v5.600 h6 v7.400 h-6 v5.600 h-7.400 v-5.600 h-6 v-7.400 h6 z" fill="#000" stroke="#000" stroke-width="1.400" stroke-linejoin="round"/><path d="M1025.600 466.200 h7.400 v5.600 h6 v7.400 h-6 v5.600 h-7.400 v-5.600 h-6 v-7.400 h6 z" fill="#fff" stroke="#000" stroke-width="1.400" stroke-linejoin="round"/>
<path d="M1416 378.500 l5 7 h-10 z" fill="#707070" stroke="#707070" stroke-width="2.600" stroke-linejoin="round"/>
<path d="M1416 920.500 l5 -7 h-10 z" fill="#707070" stroke="#707070" stroke-width="2.600" stroke-linejoin="round"/>
<defs><linearGradient id="sun" x1="0" y1="0" x2="1" y2="1"><stop offset="0" stop-color="#fcb723"/><stop offset="1" stop-color="#f0601f"/></linearGradient><linearGradient id="win" gradientUnits="userSpaceOnUse" x1="518" y1="1027" x2="553" y2="1062"><stop offset="0" stop-color="#7dd8fb"/><stop offset="1" stop-color="#0f96ee"/></linearGradient></defs>
<circle cx="47" cy="1043" r="15" fill="url(#sun)"/><circle cx="57.5" cy="1029.5" r="11.5" fill="#c42b1c"/>
<rect x="518" y="1027.5" width="16.7" height="16.5" rx="1" fill="url(#win)"/>
<rect x="536.5" y="1027.5" width="16.7" height="16.5" rx="1" fill="url(#win)"/>
<rect x="518" y="1045.8" width="16.7" height="16.5" rx="1" fill="url(#win)"/>
<rect x="536.5" y="1045.8" width="16.7" height="16.5" rx="1" fill="url(#win)"/>
<circle cx="600.500" cy="1042" r="7.900" fill="none" stroke="#222" stroke-width="2.200"/><path d="M606.600 1048.300 l4.800 4.800" stroke="#222" stroke-width="2.600" stroke-linecap="round"/>
<defs><clipPath id="jc"><path d="M826 1024.200 h54 a20 20 0 0 1 0 40 h-54 c-4 -6 -5 -14 -3 -22 c1 -7 2 -12 3 -18 z"/></clipPath><linearGradient id="riv" x1="0" y1="0" x2="0.300" y2="1"><stop offset="0" stop-color="#a5e6e4"/><stop offset="1" stop-color="#27b3bd"/></linearGradient><linearGradient id="bush" x1="0" y1="0" x2="0" y2="1"><stop offset="0" stop-color="#a6c95a"/><stop offset="1" stop-color="#4c9f4c"/></linearGradient></defs><g clip-path="url(#jc)"><rect x="820" y="1024" width="82" height="41" fill="#f3f3f3"/><path d="M836 1065 c4 -8 14 -12 24 -16 l16 0 l4 16 z" fill="#3dbcc4"/><path d="M846 1043 l9 -11 l4 3.500 l3 -1.500 l4 4 l3 -3 l5 4.500 l8 0 l3 3.500 z" fill="#8d86b4"/><path d="M862 1036.500 l4 -2.500 l4 4 l3 -3 l5 4.500 l6 0 l2 2.500 l-22 0 z" fill="#aaa8cf"/><path d="M851 1043 c10 -3 22 -3 30 -2.500 c-12 3 -18 5 -20 8 c6 3 8 8 12 16 h-36 c6 -6 14 -9 17 -14 c1 -3 0 -5 -3 -7.500 z" fill="url(#riv)"/><ellipse cx="843" cy="1047" rx="14" ry="6" fill="#1f7d2d"/><ellipse cx="846" cy="1052" rx="11" ry="5" fill="#2d8c35"/><ellipse cx="849" cy="1050" rx="6" ry="2.500" fill="#a9c83b"/><ellipse cx="834" cy="1055" rx="10" ry="8" fill="#23803a"/><ellipse cx="826" cy="1050" rx="4" ry="6" fill="#3a3f55"/><ellipse cx="874" cy="1045.500" rx="13" ry="4" fill="#1f8b3a"/><ellipse cx="870" cy="1045" rx="5" ry="1.800" fill="#9fc63a"/><ellipse cx="838" cy="1035" rx="11" ry="8" fill="#4fae3a"/><ellipse cx="832" cy="1038" rx="7" ry="9" fill="#67bd45"/><ellipse cx="843" cy="1031" rx="7" ry="4" fill="#3a9a33"/><path d="M835 1037 c-1 9 -5 18 -9 27 M837 1037 c0 10 3 19 4 27 M836 1040 l-8 20" stroke="#d98a2b" stroke-width="1.300" fill="none"/><ellipse cx="884" cy="1036" rx="12" ry="8" fill="#3c9f49"/><ellipse cx="892" cy="1031" rx="6" ry="6" fill="#7aad4a"/><rect x="892" y="1033" width="2" height="4" fill="#d9702b"/><ellipse cx="893" cy="1047" rx="9" ry="8" fill="#2f8f3f"/><ellipse cx="884" cy="1056" rx="15" ry="9" fill="url(#bush)"/><ellipse cx="874" cy="1060" rx="8" ry="6" fill="#5faa50"/></g>
<defs><linearGradient id="tv1" x1="0" y1="0" x2="0" y2="1"><stop offset="0" stop-color="#767676"/><stop offset="1" stop-color="#505050"/></linearGradient><linearGradient id="tv2" x1="1" y1="0" x2="0" y2="1"><stop offset="0" stop-color="#ffffff"/><stop offset="1" stop-color="#e0e0e0"/></linearGradient><linearGradient id="tv3" x1="1" y1="0" x2="0" y2="1"><stop offset="0" stop-color="#cfcfcf"/><stop offset="1" stop-color="#a2a2a2"/></linearGradient></defs><rect x="921.300" y="1036.500" width="26.700" height="24" rx="2.500" fill="url(#tv1)"/><rect x="930" y="1027" width="27" height="24.700" rx="2.500" fill="url(#tv2)"/><path d="M930 1036.500 h18 v12.700 a2.500 2.500 0 0 1 -2.500 2.500 h-13 a2.500 2.500 0 0 1 -2.500 -2.500 z" fill="url(#tv3)"/>
<defs><linearGradient id="cpl" x1="0" y1="0" x2="0" y2="1"><stop offset="0" stop-color="#1e96f2"/><stop offset="0.3" stop-color="#27b1d8"/><stop offset="0.6" stop-color="#6dd05c"/><stop offset="1" stop-color="#f8d41a"/></linearGradient><linearGradient id="cpr" x1="0" y1="0" x2="0" y2="1"><stop offset="0" stop-color="#a855e8"/><stop offset="0.45" stop-color="#f0508f"/><stop offset="0.85" stop-color="#ff8a5c"/><stop offset="1" stop-color="#ffb590"/></linearGradient></defs><path d="M1006 1029 L1011 1029 Q1013.500 1030 1014 1033 L1014.500 1037.500 L1004 1037.500 Z" fill="#1b55d8"/><path d="M993 1028.500 L1009.500 1028.500 L1002.500 1050.500 L990.500 1050.500 Q988 1050.500 988.300 1047.500 L990.500 1031 Q991 1028.500 993 1028.500 Z" fill="url(#cpl)"/><path d="M997 1050.500 L1005.500 1050.500 L1004 1056 Q1003 1059 1000.500 1059.300 Q998 1058.500 997.600 1055 Z" fill="#ef5a2c"/><path d="M1009.500 1037.200 L1018.500 1037.200 Q1021.800 1037.800 1021.400 1041 L1018.500 1055 Q1017.500 1059.400 1014 1059.400 L1001 1059.400 Q1004.500 1058.500 1005.300 1055 Z" fill="url(#cpr)"/>
<defs><linearGradient id="fol" x1="0" y1="0" x2="1" y2="1"><stop offset="0" stop-color="#ffd966"/><stop offset="1" stop-color="#fbbf24"/></linearGradient></defs><path d="M1052.800 1030.500 a2.500 2.500 0 0 1 2.500 -2.500 h10 l3.500 3 h-16 z" fill="#e8a80c"/><path d="M1052.800 1031 h1 l13 0 l2 -0.500 h17.500 a2.700 2.700 0 0 1 2.700 2.700 v24.100 a2.700 2.700 0 0 1 -2.700 2.700 h-30.800 a2.700 2.700 0 0 1 -2.700 -2.700 z" fill="url(#fol)"/><path d="M1052.800 1033.500 v-3 h13.500 l2.500 0 v3 z" fill="#e8a80c"/><path d="M1052.800 1034.200 h14 l2.500 -3.700 h17 a2.700 2.700 0 0 1 2.700 2.700 v24.100 a2.700 2.700 0 0 1 -2.700 2.700 h-30.800 a2.700 2.700 0 0 1 -2.700 -2.700 z" fill="url(#fol)"/><path d="M1059 1060 v-6.800 a3 3 0 0 1 3 -3 h17.400 a3 3 0 0 1 3 3 v6.800 z" fill="#1a8ae0"/><rect x="1063.500" y="1053.800" width="15" height="2.400" rx="1.200" fill="#0e5ca8"/>
<circle cx="1137" cy="1043.7" r="18" fill="#fff"/><path d="M1137 1043.7 L1121.4 1034.7 A18 18 0 0 1 1152.6 1034.7 Z" fill="#ea4335"/><path d="M1137 1043.7 L1152.6 1034.7 A18 18 0 0 1 1137 1061.7 Z" fill="#fbbc04"/><path d="M1137 1043.7 L1137 1061.7 A18 18 0 0 1 1121.4 1034.7 Z" fill="#34a853"/><path d="M1137 1034.7 h15.6 a18 18 0 0 0 -31.2 0 l7.8 13.5 z" fill="#ea4335"/><path d="M1144.8 1048.2 l-7.8 13.5 a18 18 0 0 0 15.6 -27 h-15.6 z" fill="#fbbc04"/><path d="M1129.2 1048.2 l-7.8 -13.5 a18 18 0 0 0 15.6 27 l7.8 -13.5 z" fill="#34a853"/><circle cx="1137" cy="1043.7" r="8.6" fill="#fff"/><circle cx="1137" cy="1043.7" r="6.8" fill="#4285f4"/>
<circle cx="1203" cy="1043.7" r="17.5" fill="#f7f2f2"/><rect x="1191.200" y="1038.200" width="10.400" height="4" rx="2" fill="#36c5f0"/><rect x="1197.600" y="1032" width="4" height="4.200" rx="2" fill="#36c5f0"/><rect x="1203.700" y="1032" width="4.100" height="10.200" rx="2" fill="#2eb67d"/><rect x="1209.600" y="1038.200" width="4.100" height="4" rx="2" fill="#2eb67d"/><rect x="1203.700" y="1045.600" width="10.800" height="4" rx="2" fill="#ecb22e"/><rect x="1203.700" y="1051.600" width="4.100" height="4.100" rx="2" fill="#ecb22e"/><rect x="1197.600" y="1045.600" width="4" height="10.100" rx="2" fill="#e01e5a"/><rect x="1191.200" y="1045.600" width="4" height="4" rx="2" fill="#e01e5a"/><circle cx="1217.5" cy="1030.5" r="11.3" fill="#77404b"/><circle cx="1217.5" cy="1030.5" r="9.6" fill="#e01e4f"/>
<path d="M1269 1026 a17.7 17.7 0 1 1 -9.5 32.7 l-8.5 2.5 l2.6 -8.2 a17.7 17.7 0 0 1 15.4 -27 z" fill="#25d366"/><path d="M1269 1030 a13.8 13.8 0 1 1 -7.6 25.3 l-5 1.5 l1.6 -4.8 a13.8 13.8 0 0 1 11 -22 z" fill="#202020"/><path d="M1263.5 1036 c-1.5 0.5 -2.5 2.5 -1.8 5 c1.5 5 6 9.5 11 11 c2.5 0.7 4.5 -0.3 5 -1.8 l0.3 -1.5 l-4 -2 l-1.7 1.7 c-2.5 -1 -4.800 -3.300 -5.800 -5.800 l1.7 -1.7 l-2 -4 z" fill="#25d366"/>
<defs><linearGradient id="xg3" x1="0" y1="0" x2="1" y2="1"><stop offset="0" stop-color="#1d7a31"/><stop offset="1" stop-color="#35983d"/></linearGradient></defs><rect x="1321.4" y="1026.7" width="27.1" height="33.7" rx="3.5" fill="url(#xg3)"/><path d="M1321.4 1048.4 v-18.2 a3.5 3.5 0 0 1 3.5 -3.5 h10.1 v21.7 z" fill="#74d653"/><path d="M1335 1026.7 h10 a3.5 3.5 0 0 1 3.5 3.5 v8.800 h-13.5 z" fill="#8fe56a"/><rect x="1321.4" y="1040" width="13.6" height="8.4" fill="#5fc047"/><rect x="1317" y="1041.800" width="14.800" height="15.100" rx="2.500" fill="url(#xg2)"/>
<polyline points="1471,1047.5 1479,1040 1487,1047.5" fill="none" stroke="#fff" stroke-width="2" stroke-linecap="round" stroke-linejoin="round"/>
<path d="M1519 1051 a5 5 0 0 1 0.5 -10 a8 8 0 0 1 15 -1.500 a5.500 5.500 0 0 1 2 10.5 z" fill="#d6d6d6"/><path d="M1519 1051 a5 5 0 0 1 0.5 -10 a7 7 0 0 1 6 -4 l-2 14 z" fill="#f2f2f2"/><circle cx="1532" cy="1049" r="6.6" fill="#1a78d6"/><rect x="1531.200" y="1048" width="1.7" height="4.5" fill="#fff"/><circle cx="1532" cy="1045.800" r="1" fill="#fff"/>
<rect x="1570.5" y="1033.3" width="9" height="14.5" rx="4.5" fill="none" stroke="#6cc9e6" stroke-width="1.8"/><path d="M1567 1043 a8 8 0 0 0 16 0 M1575 1051 v4.5" fill="none" stroke="#6cc9e6" stroke-width="1.8" stroke-linecap="round"/>
<g fill="none" stroke="#fff" stroke-width="1.9" stroke-linecap="round"><path d="M1678 1041.5 a16 16 0 0 1 22 0"/><path d="M1681.500 1045.500 a11 11 0 0 1 15 0"/><path d="M1685 1049.300 a6 6 0 0 1 8 0"/></g><circle cx="1689" cy="1051" r="1.8" fill="#fff"/>
<path d="M1713.500 1040 h4 l5.500 -5 v18 l-5.500 -5 h-4 z" fill="none" stroke="#fff" stroke-width="1.6" stroke-linejoin="round"/><g fill="none" stroke="#fff" stroke-width="1.6" stroke-linecap="round"><path d="M1726.500 1040 a5 5 0 0 1 0 8"/><path d="M1729.500 1037 a9 9 0 0 1 0 14"/><path d="M1732.500 1034.500 a13 13 0 0 1 0 19"/></g>
<rect x="1750" y="1037" width="20.5" height="13.5" rx="3" fill="none" stroke="#fff" stroke-width="1.7"/><path d="M1772.500 1041 v5.500" stroke="#fff" stroke-width="2.2" stroke-linecap="round"/><rect x="1752.800" y="1039.800" width="15" height="8" rx="1.5" fill="#fff"/><path d="M1755 1031.500 l-4.500 7.500 h4 l-2 6 l6 -8 h-4 l2.500 -5.500 z" fill="#fff" stroke="#202020" stroke-width="1"/>
</svg>
<div id="txt" style="position:absolute;left:0;top:0;width:1920px;height:1080px;will-change:transform;">
<span class="t" id="t0" style="left:26.8px;top:33px;font-size:10.5px;color:#fff;font-weight:700;transform:scaleX(1.0571);">X</span>
<span class="t" id="t1" style="left:71.5px;top:28px;font-size:16.5px;color:#242424;transform:scaleX(0.9107);">AutoSave</span>
<span class="t" id="t2" style="left:181.3px;top:28px;font-size:16.5px;color:#424242;transform:scaleX(0.9584);">Off</span>
<span class="t" id="t3" style="left:444.3px;top:27px;font-size:18px;color:#242424;transform:scaleX(1.0446);">qnaimport-custom-format-updated</span>
<span class="t" id="t4" style="left:737.3px;top:29px;font-size:15px;color:#242424;transform:scaleX(0.9);">•</span>
<span class="t" id="t5" style="left:1447.5px;top:29px;font-size:16px;color:#f3e9d0;transform:scaleX(0.8707);">SB</span>
<span class="t" id="t6" style="left:1554.01px;top:29px;font-size:16px;color:#fff;transform:scaleX(0.9909);">Buy Microsoft 365</span>
<span class="t" id="t7" style="left:31.02px;top:87px;font-size:19.5px;color:#242424;transform:scaleX(0.9805);">File</span>
<span class="t" id="t8" style="left:100.12px;top:87px;font-size:19.5px;color:#242424;-webkit-text-stroke:0.55px currentColor;transform:scaleX(1.0783);">Home</span>
<span class="t" id="t9" style="left:186.53px;top:87px;font-size:19.5px;color:#242424;transform:scaleX(0.9721);">Insert</span>
<span class="t" id="t10" style="left:265.52px;top:87px;font-size:19.5px;color:#242424;transform:scaleX(0.9797);">Draw</span>
<span class="t" id="t11" style="left:341.54px;top:87px;font-size:19.5px;color:#242424;transform:scaleX(0.9579);">Page Layout</span>
<span class="t" id="t12" style="left:479.51px;top:87px;font-size:19.5px;color:#242424;transform:scaleX(0.9874);">Formulas</span>
<span class="t" id="t13" style="left:589.02px;top:87px;font-size:19.5px;color:#242424;transform:scaleX(0.9791);">Data</span>
<span class="t" id="t14" style="left:659.57px;top:87px;font-size:19.5px;color:#242424;transform:scaleX(0.9318);">Review</span>
<span class="t" id="t15" style="left:751.0px;top:87px;font-size:19.5px;color:#242424;transform:scaleX(0.9572);">View</span>
<span class="t" id="t16" style="left:821.48px;top:87px;font-size:19.5px;color:#242424;transform:scaleX(1.0189);">Help</span>
<span class="t" id="t17" style="left:960.0px;top:86px;font-size:19.5px;color:#424242;transform:scaleX(1.0175);">Tell me what you want to do</span>
<span class="t" id="t18" style="left:1681.9px;top:86px;font-size:18px;color:#242424;transform:scaleX(1.0607);">Comments</span>
<span class="t" id="t19" style="left:1828.9px;top:86px;font-size:18px;color:#fff;-webkit-text-stroke:0.55px currentColor;transform:scaleX(0.9912);">Share</span>
<span class="t" id="t20" style="left:40.05px;top:185px;font-size:17px;color:#242424;transform:scaleX(0.952);">Paste</span>
<span class="t" id="t21" style="left:51.4px;top:244px;font-size:15.5px;color:#242424;transform:scaleX(1.0255);">Clipboard</span>
<span class="t" id="t22" style="left:193.8px;top:145px;font-size:18px;color:#242424;transform:scaleX(0.9951);">Aptos Narrow</span>
<span class="t" id="t23" style="left:377.53px;top:145px;font-size:18px;color:#242424;transform:scaleX(0.9731);">11</span>
<span class="t" id="t24" style="left:449.8px;top:138px;font-size:27px;color:#333;transform:scaleX(0.8944);">A</span>
<span class="t" id="t25" style="left:490.9px;top:143px;font-size:20px;color:#333;transform:scaleX(0.9357);">A</span>
<span class="t" id="t26" style="left:201.95px;top:190px;font-size:19.5px;color:#242424;font-weight:700;transform:scaleX(0.8538);">B</span>
<span class="t" id="t27" style="left:243.94px;top:189px;font-size:21px;color:#242424;font-family:'Liberation Serif', serif;transform:scaleX(0.9444);font-style:italic;">I</span>
<span class="t" id="t28" style="left:277.42px;top:190px;font-size:19px;color:#242424;transform:scaleX(1.0833);">U</span>
<span class="t" id="t29" style="left:470.6px;top:187px;font-size:22px;color:#333;transform:scaleX(0.9067);">A</span>
<span class="t" id="t30" style="left:324.71px;top:244px;font-size:15.5px;color:#242424;transform:scaleX(0.9867);">Font</span>
<span class="t" id="t31" style="left:761.5px;top:140px;font-size:14.5px;color:#444;transform:scaleX(1.0894);">ab</span>
<span class="t" id="t32" style="left:761.5px;top:152px;font-size:14.5px;color:#444;transform:scaleX(0.9286);">c</span>
<span class="t" id="t33" style="left:633.3px;top:244px;font-size:15.5px;color:#242424;transform:scaleX(1.0299);">Alignment</span>
<span class="t" id="t34" style="left:850.7px;top:145px;font-size:18px;color:#242424;transform:scaleX(0.9137);">General</span>
<span class="t" id="t35" style="left:914.03px;top:188px;font-size:28px;color:#333;transform:scaleX(0.9696);">%</span>
<span class="t" id="t36" style="left:960.0px;top:157px;font-size:54px;color:#333;font-weight:700;font-family:'Liberation Serif', serif;transform:scaleX(0.975);">,</span>
<span class="t" id="t37" style="left:1011.0px;top:188px;font-size:14px;color:#444;transform:scaleX(0.9375);">0</span>
<span class="t" id="t38" style="left:999.01px;top:200px;font-size:14px;color:#444;transform:scaleX(0.9906);">.00</span>
<span class="t" id="t39" style="left:1039.04px;top:188px;font-size:14px;color:#444;transform:scaleX(0.9638);">.00</span>
<span class="t" id="t40" style="left:1045.99px;top:200px;font-size:14px;color:#444;transform:scaleX(1.0101);">.0</span>
<span class="t" id="t41" style="left:913.24px;top:244px;font-size:15.5px;color:#242424;transform:scaleX(1.0636);">Number</span>
<span class="t" id="t42" style="left:1125.3px;top:134px;font-size:17px;color:#5c5c5c;transform:scaleX(1.0723);">Conditional Formatting</span>
<span class="t" id="t43" style="left:1124.78px;top:173px;font-size:17px;color:#242424;transform:scaleX(1.023);">Format as Table</span>
<span class="t" id="t44" style="left:1125.3px;top:211px;font-size:17px;color:#242424;transform:scaleX(0.9611);">Cell Styles</span>
<span class="t" id="t45" style="left:1193.6px;top:244px;font-size:15.5px;color:#242424;transform:scaleX(0.9115);">Styles</span>
<span class="t" id="t46" style="left:1399.67px;top:134px;font-size:17px;color:#242424;transform:scaleX(1.0313);">Insert</span>
<span class="t" id="t47" style="left:1399.68px;top:173px;font-size:17px;color:#242424;transform:scaleX(1.0234);">Delete</span>
<span class="t" id="t48" style="left:1399.64px;top:211px;font-size:17px;color:#242424;transform:scaleX(1.0581);">Format</span>
<span class="t" id="t49" style="left:1414.5px;top:244px;font-size:15.5px;color:#242424;transform:scaleX(0.9078);">Cells</span>
<span class="t" id="t50" style="left:1607.0px;top:129px;font-size:24.5px;color:#1e8bcd;transform:scaleX(0.8824);">A</span>
<span class="t" id="t51" style="left:1607.0px;top:150px;font-size:25.5px;color:#333;transform:scaleX(0.8667);">Z</span>
<span class="t" id="t52" style="left:1602.0px;top:183px;font-size:17px;color:#242424;transform:scaleX(1.0793);">Sort &amp;</span>
<span class="t" id="t53" style="left:1601.0px;top:207px;font-size:17px;color:#242424;transform:scaleX(0.9969);">Filter</span>
<span class="t" id="t54" style="left:1671.43px;top:183px;font-size:17px;color:#242424;transform:scaleX(1.0698);">Find &amp;</span>
<span class="t" id="t55" style="left:1667.4px;top:207px;font-size:17px;color:#242424;transform:scaleX(0.9511);">Select</span>
<span class="t" id="t56" style="left:1602.26px;top:244px;font-size:15.5px;color:#242424;transform:scaleX(1.0356);">Editing</span>
<span class="t" id="t57" style="left:1762.3px;top:183px;font-size:17px;color:#5c5c5c;transform:scaleX(1.0833);">Add-ins</span>
<span class="t" id="t58" style="left:1765.3px;top:244px;font-size:15.5px;color:#242424;">Add-ins</span>
<span class="t" id="t59" style="left:65.7px;top:282px;font-size:16.5px;color:#242424;-webkit-text-stroke:0.55px currentColor;transform:scaleX(0.9951);">POSSIBLE DATA LOSS</span>
<span class="t" id="t60" style="left:257.5px;top:282px;font-size:18px;color:#242424;transform:scaleX(0.9904);">Some features might be lost if you save this workbook in the comma-delimited (.csv) format. To preserve these features, save it in an Excel file format.</span>
<span class="t" id="t61" style="left:1468.98px;top:281px;font-size:18px;color:#242424;transform:scaleX(1.0184);">Don&#x27;t show again</span>
<span class="t" id="t62" style="left:1651.5px;top:281px;font-size:18px;color:#242424;transform:scaleX(0.907);">Save As...</span>
<span class="t" id="t63" style="left:18.63px;top:334px;font-size:18.5px;color:#242424;transform:scaleX(1.0733);">H2</span>
<span class="t" id="t64" style="left:276.0px;top:327px;font-size:27px;color:#333;-webkit-text-stroke:0.55px currentColor;font-family:'Liberation Serif', serif;transform:scaleX(1.2273);font-style:italic;">f</span>
<span class="t" id="t65" style="left:287.45px;top:332px;font-size:20px;color:#333;-webkit-text-stroke:0.55px currentColor;font-family:'Liberation Serif', serif;transform:scaleX(0.95);font-style:italic;">x</span>
<span class="t" id="t66" style="left:326.5px;top:334px;font-size:18.5px;color:#242424;transform:scaleX(1.0592);">answer</span>
<span class="t" id="t67" style="left:178.0px;top:938px;font-size:20.5px;color:#242424;-webkit-text-stroke:0.55px currentColor;transform:scaleX(1.0985);">qnaimport-custom-format-updated</span>
<span class="t" id="t68" style="left:15.02px;top:985px;font-size:15.5px;color:#3b3b3b;transform:scaleX(0.9761);">Ready</span>
<span class="t" id="t69" style="left:102.4px;top:989px;font-size:16.5px;color:#222;-webkit-text-stroke:0.55px currentColor;transform:scaleX(0.7556);">?</span>
<span class="t" id="t70" style="left:115.0px;top:985px;font-size:15.5px;color:#3b3b3b;transform:scaleX(0.989);">Accessibility: Unavailable</span>
<span class="t" id="t71" style="left:1868.47px;top:985px;font-size:15px;color:#3b3b3b;transform:scaleX(1.0263);">100%</span>
<span class="t" id="t72" style="left:81.51px;top:377px;font-size:17.5px;color:#3b3b3b;transform:scaleX(1.04);">A</span>
<span class="t" id="t73" style="left:177.26px;top:377px;font-size:17.5px;color:#3b3b3b;transform:scaleX(1.04);">B</span>
<span class="t" id="t74" style="left:273.26px;top:377px;font-size:17.5px;color:#3b3b3b;transform:scaleX(1.04);">C</span>
<span class="t" id="t75" style="left:368.74px;top:377px;font-size:17.5px;color:#3b3b3b;transform:scaleX(1.04);">D</span>
<span class="t" id="t76" style="left:517.26px;top:377px;font-size:17.5px;color:#3b3b3b;transform:scaleX(1.04);">E</span>
<span class="t" id="t77" style="left:727.78px;top:377px;font-size:17.5px;color:#3b3b3b;transform:scaleX(1.04);">F</span>
<span class="t" id="t78" style="left:884.74px;top:377px;font-size:17.5px;color:#3b3b3b;transform:scaleX(1.04);">G</span>
<span class="t" id="t79" style="left:980.74px;top:377px;font-size:17.5px;color:#185c37;transform:scaleX(1.04);">H</span>
<span class="t" id="t80" style="left:1090.4px;top:377px;font-size:17.5px;color:#3b3b3b;transform:scaleX(1.04);">I</span>
<span class="t" id="t81" style="left:1271.34px;top:377px;font-size:17.5px;color:#3b3b3b;transform:scaleX(1.04);">J</span>
<span class="t" id="t82" style="left:14.75px;top:406px;font-size:17.5px;color:#3b3b3b;transform:scaleX(1.08);">1</span>
<span class="t" id="t83" style="left:15.29px;top:435px;font-size:17.5px;color:#185c37;transform:scaleX(1.08);">2</span>
<span class="t" id="t84" style="left:15.29px;top:464px;font-size:17.5px;color:#3b3b3b;transform:scaleX(1.08);">3</span>
<span class="t" id="t85" style="left:14.75px;top:493px;font-size:17.5px;color:#3b3b3b;transform:scaleX(1.08);">4</span>
<span class="t" id="t86" style="left:15.29px;top:522px;font-size:17.5px;color:#3b3b3b;transform:scaleX(1.08);">5</span>
<span class="t" id="t87" style="left:15.29px;top:551px;font-size:17.5px;color:#3b3b3b;transform:scaleX(1.08);">6</span>
<span class="t" id="t88" style="left:15.29px;top:580px;font-size:17.5px;color:#3b3b3b;transform:scaleX(1.08);">7</span>
<span class="t" id="t89" style="left:15.29px;top:609px;font-size:17.5px;color:#3b3b3b;transform:scaleX(1.08);">8</span>
<span class="t" id="t90" style="left:15.29px;top:638px;font-size:17.5px;color:#3b3b3b;transform:scaleX(1.08);">9</span>
<span class="t" id="t91" style="left:8.95px;top:667px;font-size:17.5px;color:#3b3b3b;transform:scaleX(1.08);">10</span>
<span class="t" id="t92" style="left:10.2px;top:696px;font-size:17.5px;color:#3b3b3b;transform:scaleX(1.08);">11</span>
<span class="t" id="t93" style="left:9.49px;top:725px;font-size:17.5px;color:#3b3b3b;transform:scaleX(1.08);">12</span>
<span class="t" id="t94" style="left:9.49px;top:754px;font-size:17.5px;color:#3b3b3b;transform:scaleX(1.08);">13</span>
<span class="t" id="t95" style="left:8.95px;top:783px;font-size:17.5px;color:#3b3b3b;transform:scaleX(1.08);">14</span>
<span class="t" id="t96" style="left:9.49px;top:812px;font-size:17.5px;color:#3b3b3b;transform:scaleX(1.08);">15</span>
<span class="t" id="t97" style="left:9.49px;top:841px;font-size:17.5px;color:#3b3b3b;transform:scaleX(1.08);">16</span>
<span class="t" id="t98" style="left:9.49px;top:870px;font-size:17.5px;color:#3b3b3b;transform:scaleX(1.08);">17</span>
<span class="t" id="t99" style="left:9.49px;top:899px;font-size:17.5px;color:#3b3b3b;transform:scaleX(1.08);">18</span>
<span class="t" id="t100" style="left:43.0px;top:403px;font-size:19px;color:#000;transform:scaleX(1.109);-webkit-text-stroke:0.25px #000;">email</span>
<span class="t" id="t101" style="left:138.42px;top:403px;font-size:19px;color:#000;transform:scaleX(1.0753);-webkit-text-stroke:0.25px #000;">mobile</span>
<span class="t" id="t102" style="left:234.44px;top:403px;font-size:19px;color:#000;transform:scaleX(1.0552);-webkit-text-stroke:0.25px #000;">name</span>
<span class="t" id="t103" style="left:329.98px;top:403px;font-size:19px;color:#000;transform:scaleX(1.0192);-webkit-text-stroke:0.25px #000;">reference_</span>
<span class="t" id="t104" style="left:426.44px;top:403px;font-size:19px;color:#000;transform:scaleX(1.0573);-webkit-text-stroke:0.25px #000;">reference_product_id</span>
<span class="t" id="t105" style="left:625.94px;top:403px;font-size:19px;color:#000;transform:scaleX(1.0552);-webkit-text-stroke:0.25px #000;">reference_product_slug</span>
<span class="t" id="t106" style="left:847.5px;top:403px;font-size:19px;color:#000;transform:scaleX(1.0678);-webkit-text-stroke:0.25px #000;">question</span>
<span class="t" id="t107" style="left:943.9px;top:403px;font-size:19px;color:#000;transform:scaleX(1.0174);-webkit-text-stroke:0.25px #000;">answer</span>
<span class="t" id="t108" style="left:1038.87px;top:403px;font-size:19px;color:#000;transform:scaleX(1.026);-webkit-text-stroke:0.25px #000;">is_approved</span>
<span class="t" id="t109" style="left:1154.2px;top:403px;font-size:19px;color:#000;transform:scaleX(1.053);-webkit-text-stroke:0.25px #000;">created_at</span>
<span class="t" id="t110" style="left:43.0px;top:432px;font-size:19px;color:#000;transform:scaleX(1.0425);-webkit-text-stroke:0.25px #000;">a1@necto</span>
<span class="t" id="t111" style="left:144.98px;top:432px;font-size:19px;color:#000;transform:scaleX(1.016);-webkit-text-stroke:0.25px #000;">1.23E+09</span>
<span class="t" id="t112" style="left:235.5px;top:432px;font-size:19px;color:#000;transform:scaleX(1.0454);-webkit-text-stroke:0.25px #000;">a2</span>
<span class="t" id="t113" style="left:331.0px;top:432px;font-size:19px;color:#000;transform:scaleX(1.0329);-webkit-text-stroke:0.25px #000;">shopify</span>
<span class="t" id="t114" style="left:509.96px;top:432px;font-size:19px;color:#000;transform:scaleX(1.0422);-webkit-text-stroke:0.25px #000;">1234567890</span>
<span class="t" id="t115" style="left:625.92px;top:432px;font-size:19px;color:#000;transform:scaleX(1.0846);-webkit-text-stroke:0.25px #000;">product-slug</span>
<span class="t" id="t116" style="left:847.5px;top:432px;font-size:19px;color:#000;transform:scaleX(1.0678);-webkit-text-stroke:0.25px #000;">question</span>
<span class="t" id="t117" style="left:943.9px;top:432px;font-size:19px;color:#000;transform:scaleX(1.0174);-webkit-text-stroke:0.25px #000;">answer</span>
<span class="t" id="t118" style="left:1136.49px;top:432px;font-size:19px;color:#000;transform:scaleX(0.9111);-webkit-text-stroke:0.25px #000;">1</span>
<span class="t" id="t119" style="left:1154.2px;top:432px;font-size:19px;color:#000;transform:scaleX(1.0305);-webkit-text-stroke:0.25px #000;">2022-10-03T15:08:12.785Z</span>
<span class="t" id="t120" style="left:53.0px;top:1023px;font-size:16px;color:#fff;">2</span>
<span class="t" id="t121" style="left:76.0px;top:1023px;font-size:18px;color:#fff;transform:scaleX(0.9448);">27°C</span>
<span class="t" id="t122" style="left:76.0px;top:1047px;font-size:18px;color:#e4e4e4;transform:scaleX(0.9797);">Sunny</span>
<span class="t" id="t123" style="left:629.5px;top:1035px;font-size:21.5px;color:#5a5a5a;transform:scaleX(0.9008);">Search</span>
<span class="t" id="t124" style="left:1213.2px;top:1024px;font-size:15.5px;color:#fff;transform:scaleX(0.975);">3</span>
<span class="t" id="t125" style="left:1320.8px;top:1044px;font-size:12.5px;color:#fff;font-weight:700;transform:scaleX(0.8);">X</span>
<span class="t" id="t126" style="left:1614.05px;top:1026px;font-size:17.5px;color:#fff;transform:scaleX(0.9501);">ENG</span>
<span class="t" id="t127" style="left:1621.87px;top:1049px;font-size:17.5px;color:#fff;transform:scaleX(1.1348);">IN</span>
<span class="t" id="t128" style="left:1846.98px;top:1024px;font-size:17.5px;color:#fff;transform:scaleX(1.0223);">14:33</span>
<span class="t" id="t129" style="left:1796.92px;top:1048px;font-size:17.5px;color:#fff;transform:scaleX(1.0753);">10-11-2025</span>
<span class="t" style="left:660px;top:149.500px;font-size:15.500px;color:#3b3b3b;transform:rotate(-45deg);transform-origin:0 0;">ab</span>
</div>
</body></html>
